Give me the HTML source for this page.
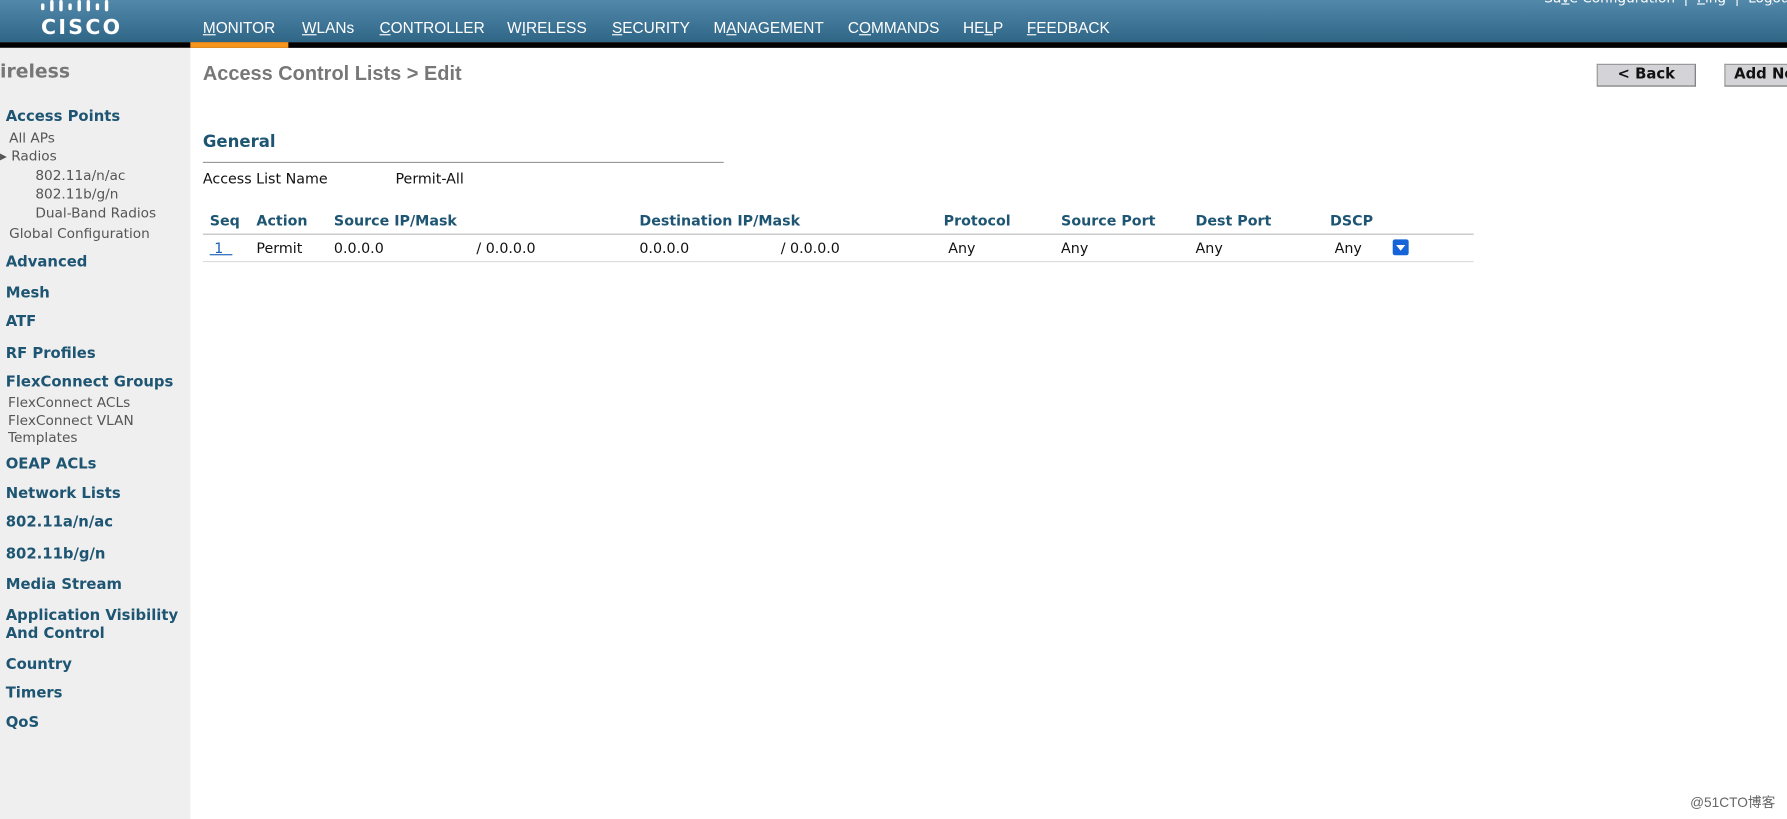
<!DOCTYPE html>
<html><head><meta charset="utf-8"><style>
html,body{margin:0;padding:0;width:1787px;height:819px;overflow:hidden;background:#fff}
#w{position:absolute;left:0;top:0;width:1568px;height:719px;transform:scale(1.1397);transform-origin:0 0;font-family:"DejaVu Sans","Liberation Sans",sans-serif}
.a{position:absolute;white-space:nowrap}
#hdr{position:absolute;left:0;top:0;width:1568px;height:37px;background:linear-gradient(#5288aa,#2f6585)}
#blk{position:absolute;left:0;top:37px;width:1568px;height:5px;background:#000}
#org{position:absolute;left:167px;top:37px;width:86px;height:5px;background:#f7941d}
.nav{position:absolute;top:17px;color:#fff;font:13.5px "Liberation Sans",sans-serif}
.nav u{text-decoration:underline}
#side{position:absolute;left:0;top:42px;width:167px;height:677px;background:#efefef}
.h{position:absolute;left:5px;font-size:13px;font-weight:bold;color:#1d5572}
.s{position:absolute;font-size:12px;color:#555}
.t{position:absolute;font-size:12.5px;color:#111}
.th{position:absolute;top:186px;font-size:12.5px;font-weight:bold;color:#1d5572}
.btn{position:absolute;top:56px;height:18px;background:#d3d3d8;border:1px solid #999;border-bottom-color:#777;border-right-color:#777;font-size:13px;font-weight:bold;color:#111;text-align:center;line-height:18px}
</style></head><body><div id="w">
<div id="hdr"></div><div id="blk"></div><div id="org"></div>
<svg class="a" style="left:35px;top:0" width="70" height="12"><g fill="#fff"><rect x="1" y="3" width="3" height="6" rx="1.5"/><rect x="9" y="0" width="3" height="10" rx="1.5"/><rect x="17" y="0" width="3" height="10" rx="1.5"/><rect x="25" y="3" width="3" height="6" rx="1.5"/><rect x="33" y="0" width="3" height="10" rx="1.5"/><rect x="41" y="0" width="3" height="10" rx="1.5"/><rect x="49" y="3" width="3" height="6" rx="1.5"/><rect x="57" y="0" width="3" height="10" rx="1.5"/></g></svg>
<div class="a" style="left:36px;top:14px;color:#fff;font:bold 18px 'DejaVu Sans',sans-serif;letter-spacing:2px">CISCO</div>
<div class="nav" style="left:178px"><u>M</u>ONITOR</div>
<div class="nav" style="left:265px"><u>W</u>LANs</div>
<div class="nav" style="left:333px"><u>C</u>ONTROLLER</div>
<div class="nav" style="left:445px">W<u>I</u>RELESS</div>
<div class="nav" style="left:537px"><u>S</u>ECURITY</div>
<div class="nav" style="left:626px">M<u>A</u>NAGEMENT</div>
<div class="nav" style="left:744px">C<u>O</u>MMANDS</div>
<div class="nav" style="left:845px">HE<u>L</u>P</div>
<div class="nav" style="left:901px"><u>F</u>EEDBACK</div>
<div class="a" style="left:1355px;top:-9px;color:#fff;font:12px 'DejaVu Sans',sans-serif">Sa<u>v</u>e Configuration &nbsp;|&nbsp; <u>P</u>ing &nbsp;|&nbsp; Lo<u>g</u>out</div>

<div id="side"></div>
<div class="a" style="left:0;top:53px;font-size:16.5px;font-weight:bold;color:#777">ireless</div>
<div class="h" style="top:95px">Access Points</div>
<div class="s" style="left:8px;top:114px">All APs</div>
<div class="s" style="left:0;top:130px">▸ Radios</div>
<div class="s" style="left:31px;top:147px">802.11a/n/ac</div>
<div class="s" style="left:31px;top:163px">802.11b/g/n</div>
<div class="s" style="left:31px;top:180px">Dual-Band Radios</div>
<div class="s" style="left:8px;top:198px">Global Configuration</div>
<div class="h" style="top:223px">Advanced</div>
<div class="h" style="top:250px">Mesh</div>
<div class="h" style="top:275px">ATF</div>
<div class="h" style="top:303px">RF Profiles</div>
<div class="h" style="top:328px">FlexConnect Groups</div>
<div class="s" style="left:7px;top:346px">FlexConnect ACLs</div>
<div class="s" style="left:7px;top:362px">FlexConnect VLAN</div>
<div class="s" style="left:7px;top:377px">Templates</div>
<div class="h" style="top:400px">OEAP ACLs</div>
<div class="h" style="top:426px">Network Lists</div>
<div class="h" style="top:451px">802.11a/n/ac</div>
<div class="h" style="top:479px">802.11b/g/n</div>
<div class="h" style="top:506px">Media Stream</div>
<div class="h" style="top:533px">Application Visibility</div>
<div class="h" style="top:549px">And Control</div>
<div class="h" style="top:576px">Country</div>
<div class="h" style="top:601px">Timers</div>
<div class="h" style="top:627px">QoS</div>

<div class="a" style="left:178px;top:54px;font:bold 17.5px 'Liberation Sans',sans-serif;color:#777">Access Control Lists &gt; Edit</div>
<div class="btn" style="left:1401px;width:85px">&lt; Back</div>
<div class="btn" style="left:1513px;width:80px">Add New</div>

<div class="a" style="left:178px;top:117px;font-size:14.5px;font-weight:bold;color:#1d5572">General</div>
<div class="a" style="left:178px;top:142px;width:457px;height:1px;background:#999"></div>
<div class="t" style="left:178px;top:149px">Access List Name</div>
<div class="t" style="left:347px;top:149px">Permit-All</div>

<div class="th" style="left:184px">Seq</div>
<div class="th" style="left:225px">Action</div>
<div class="th" style="left:293px">Source IP/Mask</div>
<div class="th" style="left:561px">Destination IP/Mask</div>
<div class="th" style="left:828px">Protocol</div>
<div class="th" style="left:931px">Source Port</div>
<div class="th" style="left:1049px">Dest Port</div>
<div class="th" style="left:1167px">DSCP</div>
<div class="a" style="left:178px;top:205px;width:1115px;height:1px;background:#bbb"></div>
<div class="t" style="left:184px;top:210px;color:#1a5fb4;text-decoration:underline">&nbsp;1&nbsp;&nbsp;</div>
<div class="t" style="left:225px;top:210px">Permit</div>
<div class="t" style="left:293px;top:210px">0.0.0.0</div>
<div class="t" style="left:418px;top:210px">/ 0.0.0.0</div>
<div class="t" style="left:561px;top:210px">0.0.0.0</div>
<div class="t" style="left:685px;top:210px">/ 0.0.0.0</div>
<div class="t" style="left:832px;top:210px">Any</div>
<div class="t" style="left:931px;top:210px">Any</div>
<div class="t" style="left:1049px;top:210px">Any</div>
<div class="t" style="left:1171px;top:210px">Any</div>
<div class="a" style="left:1222px;top:210px;width:14px;height:14px;background:#1565d8;border-radius:2px"><div style="position:absolute;left:3px;top:5px;border-left:4px solid transparent;border-right:4px solid transparent;border-top:5px solid #fff"></div></div>
<div class="a" style="left:178px;top:229px;width:1115px;height:1px;background:#ddd"></div>

<div class="a" style="left:1483px;top:695px;font-size:12px;color:#666;font-family:'Liberation Sans','Noto Sans CJK SC',sans-serif">@51CTO博客</div>
</div></body></html>
